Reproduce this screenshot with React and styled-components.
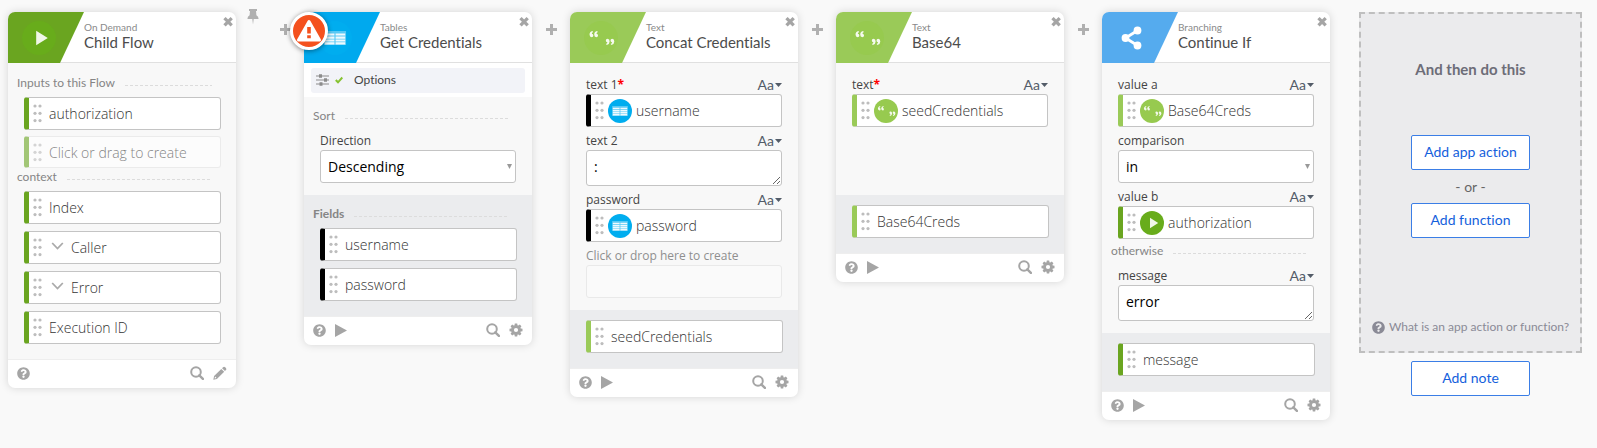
import React, { useId } from "react";
import styled, { createGlobalStyle, css } from "styled-components";
import { FaQuestionCircle } from "react-icons/fa";

const brand = 'Lato, "Open Sans", sans-serif';
const body = '"Open Sans", "Noto Sans", sans-serif';
const GREEN = "#6aa520";
const LIME = "#9aca58";

const GlobalStyle = createGlobalStyle`
  *, *::before, *::after { box-sizing: border-box; }
  body { margin: 0; background: #f9f9f9; font-family: ${body}; font-variant-ligatures: none; color: #555; }
  button { font: inherit; font-variant-ligatures: none; color: inherit; background: none; border: 0; padding: 0; cursor: pointer; }
  svg { display: block; flex: none; }
  h2, p, ul { margin: 0; padding: 0; }
`;

const Canvas = styled.main`
  display: flex;
  align-items: flex-start;
  min-height: 100vh;
  padding: 12px 15px 28px 8px;
  overflow-x: auto;
`;

const Card = styled.article`
  position: relative;
  flex: 228 1 0;
  min-width: 210px;
  border-radius: 7px;
  background: #fff;
  box-shadow: 0 0 8px rgba(0, 0, 0, 0.15);
`;

const CardHeader = styled.header`
  display: flex;
  height: 51px;
  border-bottom: 1px solid #e0e0e0;
`;

const Flag = styled.div`
  flex: none;
  display: flex;
  align-items: center;
  width: 76px;
  height: 51px;
  padding-left: 14px;
  border-top-left-radius: 7px;
  background: ${(p) => p.$color};
  clip-path: polygon(0 0, 100% 0, 52px 100%, 0 100%);
`;

const Heading = styled.div`
  flex: 1;
  min-width: 0;
  padding-top: 10px;
  font-family: ${brand};
  white-space: nowrap;
`;

const Kicker = styled.p`
  font-size: 10px;
  line-height: 11px;
  color: #8a8a8a;
`;

const Title = styled.h2`
  font-size: 15px;
  font-weight: 400;
  line-height: 18px;
  color: #4c4c4c;
`;

const CloseButton = styled.button`
  align-self: flex-start;
  margin: 5px 2px 0 0;
  color: #a5a5a5;
`;

const Inputs = styled.section`
  padding: ${(p) => p.$pad || "8px 0 12px"};
  min-height: ${(p) => p.$min || 0}px;
  background: #f8f8f8;
`;

const Outputs = styled.section`
  padding: 10px 0 15px;
  background: #ebecee;
`;

const CardFooter = styled.footer`
  display: flex;
  align-items: center;
  gap: 9px;
  height: 29px;
  padding: 0 9px 2px;
  border-top: 1px solid #eee;
  color: #a5a5a5;
`;

const Spacer = styled.span`
  flex: 1;
`;

const GroupTitle = styled.div`
  display: flex;
  align-items: center;
  gap: 10px;
  height: 23px;
  padding: ${(p) => (p.$form ? "6px" : "0")} 24px 0 9px;
  font-family: ${brand};
  font-size: 12px;
  line-height: 16px;
  color: #858585;

  span {
    padding-bottom: 5px;
    font-weight: ${(p) => (p.$strong ? 700 : 400)};
  }

  &::after {
    content: "";
    flex: 1;
    height: 1px;
    background: repeating-linear-gradient(90deg, #dcdcdc 0 3px, transparent 3px 5px);
  }
`;

const TileList = styled.ul`
  display: flex;
  flex-direction: column;
  gap: 7px;
  padding: 0 15px 0 16px;
  list-style: none;
`;

const box = css`
  height: 33px;
  border: 1px solid #c4c4c4;
  border-radius: 3px;
  background: #fff;
`;

const ghost = css`
  height: 32px;
  margin-top: -1px;
  border-color: #e4e4e4;
  opacity: 0.6;
`;

const Tile = styled.li`
  ${box}
  ${(p) => p.$ghost && ghost}
  display: flex;
  align-items: center;
  gap: 7px;
  padding-left: 4px;
  border-left: 5px solid ${(p) => p.$color};
  font-size: 14px;
  font-weight: 300;
  color: #333;
`;

const Chevron = styled.button`
  padding: 0 0 3px 2px;
  color: #aaa;
`;

const Field = styled.div`
  padding: 0 16px;
`;

const LabelRow = styled.div`
  display: flex;
  align-items: center;
  justify-content: space-between;
  height: 23px;
  padding-top: 5px;
  font-size: 12px;
  line-height: 16px;
  color: #444;
`;

const Faded = styled.span`
  color: #8f8f8f;
`;

const Required = styled.b`
  color: #f00;
`;

const CaseButton = styled.button`
  display: flex;
  align-items: center;
  gap: 1px;
  padding-bottom: 1px;
  font-family: ${brand};
  font-size: 14px;
  line-height: 16px;
  color: #535c68;
`;

const TokenBox = styled.div`
  ${box}
  display: flex;
  align-items: center;
  gap: 4px;
  padding-left: 4px;
  border-left: 5px solid ${(p) => p.$color};
  font-size: 14px;
  font-weight: 300;
  color: #333;
`;

const Disc = styled.span`
  flex: none;
  display: block;
  border-radius: 50%;
  background: ${(p) => p.$color};
`;

const TextBox = styled.textarea`
  ${box}
  display: block;
  width: 100%;
  height: 36px;
  padding: 6px 7px;
  font: 14px/20px ${body};
  color: #000;
  resize: vertical;
`;

const EmptyBox = styled.input`
  ${box}
  display: block;
  width: 100%;
  border-color: #e9e9e9;
  background: #fafafa;
`;

const SelectWrap = styled.div`
  display: grid;
  align-items: center;
  color: #999;

  > * { grid-area: 1 / 1; }
  > svg { justify-self: end; margin-right: 4px; pointer-events: none; }
`;

const Select = styled.select`
  ${box}
  appearance: none;
  width: 100%;
  padding: 0 7px;
  font: 14px/20px ${body};
  color: #000;
`;

const OptionsStrip = styled.div`
  padding: 5px 7px 4px;
`;

const OptionsButton = styled.button`
  display: flex;
  align-items: center;
  width: 100%;
  height: 25px;
  padding: 0 0 2px 5px;
  border-radius: 3px;
  background: #f2f3f8;
  font-family: ${brand};
  font-size: 12px;
  color: #444;

  svg + svg { margin: 0 11px 0 6px; }
`;

const Link = styled.div`
  flex: none;
  display: flex;
  justify-content: center;
  width: 38px;
  padding-top: 12px;
  color: #b0b0b0;
`;

const PinSlot = styled.div`
  flex: none;
  display: flex;
  justify-content: center;
  width: 30px;
  margin-top: -3px;
  padding-left: 4px;
  color: #b0b0b0;
`;

const AlertBadge = styled.div`
  position: absolute;
  top: 0;
  left: -14px;
  display: flex;
  align-items: center;
  justify-content: center;
  width: 38px;
  height: 38px;
  border: 3px solid #fff;
  border-radius: 50%;
  background: #f4511e;
  box-shadow: 0 1px 5px rgba(0, 0, 0, 0.45);
`;

const NextColumn = styled.aside`
  flex: 223 1 0;
  min-width: 210px;
  display: flex;
  flex-direction: column;
  align-items: center;
  gap: 8px;
  margin-left: 29px;
  font-family: ${brand};
`;

const NextPanel = styled.div`
  display: flex;
  flex-direction: column;
  align-items: center;
  width: 100%;
  border: 2px dashed #bfbfbf;
  background: #ebebed;
  padding: 45px 0 14px;
`;

const NextTitle = styled.h2`
  margin-bottom: 56px;
  font-size: 15px;
  line-height: 20px;
  font-weight: 700;
  color: #6d6d78;
`;

const Or = styled.p`
  font-size: 14px;
  line-height: 33px;
  color: #666;
`;

const ActionButton = styled.button`
  width: 119px;
  height: 35px;
  padding-bottom: 3px;
  border: 1px solid #3b7ee6;
  border-radius: 2px;
  background: #fff;
  font-size: 14px;
  color: #1460dc;
`;

const HelpLink = styled.a`
  display: flex;
  align-items: center;
  gap: 4px;
  margin-top: 79px;
  font-size: 12px;
  line-height: 20px;
  color: #8a8a96;
  text-decoration: none;
  white-space: nowrap;
`;

const Close = () => (
  <svg width="12" height="10" viewBox="0 0 12 10">
    <path d="M2.500 1.200l7.200 7.200M9.700 1.200l-7.200 7.200" stroke="currentColor" strokeWidth="3.300" />
  </svg>
);

const Grip = () => (
  <svg width="9" height="19" viewBox="0 0 9 19" fill="#bdbdbd">
    {[2, 9.3, 16.6].map((y) => [2, 7].map((x) => <circle key={`${x}${y}`} cx={x} cy={y} r="1.6" />))}
  </svg>
);

const Caret = ({ w = 7, h = 4 }) => (
  <svg width={w} height={h} viewBox="0 0 7 4" preserveAspectRatio="none" fill="currentColor">
    <path d="M0 0h7L3.5 4z" />
  </svg>
);

const Plus = () => (
  <svg width="11" height="11" viewBox="0 0 11 11">
    <path d="M5.5 0v11M0 5.5h11" stroke="currentColor" strokeWidth="3" />
  </svg>
);

const Pin = () => (
  <svg width="12" height="16" viewBox="0 0 12 16" fill="currentColor">
    <path d="M2 0h8v2H9l.4 4.3Q11.6 7.600 11.600 10H.4Q.4 7.600 2.600 6.300L3 2H2z" />
    <path d="M5.300 10h1.400L6 15.500z" />
  </svg>
);

const Search = () => (
  <svg width="14" height="14" viewBox="0 0 14 14" fill="none" stroke="currentColor">
    <circle cx="6" cy="6" r="4.800" strokeWidth="2" />
    <path d="M9.300 9.300l3.600 3.600" strokeWidth="2.400" strokeLinecap="round" />
  </svg>
);

const Gear = () => (
  <svg width="14" height="14" viewBox="0 0 14 14">
    <g fill="currentColor">
      {[0, 45, 90, 135].map((a) => (
        <path key={a} d="M5.800 .5h2.400l.5 3v7l-.5 3H5.800l-.5-3v-7z" transform={`rotate(${a} 7 7)`} />
      ))}
      <circle cx="7" cy="7" r="4.800" />
    </g>
    <circle cx="7" cy="7" r="2.100" fill="#fff" />
  </svg>
);

const Pencil = () => (
  <svg width="14" height="14" viewBox="0 0 13 13" fill="currentColor">
    <path fillRule="evenodd" d="M9.300 1.200Q10.200.1 11.300 1.100l.7.7q1 1.100 0 2l-.9.9-2.700-2.700zM7.700 2.700l2.700 2.700-6.800 6.700-3.300.6.700-3.300zM1.900 9.700l-.4 1.800 1.800-.4z" />
  </svg>
);

const Play = () => (
  <svg width="12" height="13" viewBox="0 0 12 13" fill="currentColor">
    <path d="M0 0l12 6.500L0 13z" />
  </svg>
);

const Glyphs = {
  play: <path d="M10 6.800v10.400L18.200 12z" />,
  quote: (
    <>
      {[4.500, 7.800].map((x) => (
        <path key={x} d={`M${x + 2} 7.800q-1 .3-1 1.200 1.100.1 1.100 1.200 0 1.200-1.200 1.200-1.500 0-1.500-1.800 0-1.900 2-2.500z`} />
      ))}
      {[15.200, 18.500].map((x) => (
        <path key={x} d={`M${x + 0.300} 16.200q1-.3 1-1.200-1.100-.1-1.100-1.200 0-1.200 1.200-1.200 1.500 0 1.500 1.800 0 1.900-2 2.500z`} />
      ))}
    </>
  ),
  table: (
    <>
      <path d="M4.200 7h15.600v10H4.200z" fillOpacity="0.350" />
      {[8.800, 11, 13, 15].map((y) => (
        <path key={y} d={`M4.800 ${y}h6.800v1.500H4.800zM12.400 ${y}h6.800v1.500h-6.800z`} />
      ))}
    </>
  ),
};

const discColor = { play: "#68ac1b", quote: "#97ca4f", table: "#00adef" };

const AppIcon = ({ kind, size = 24 }) => (
  <Disc $color={discColor[kind]}>
    <svg width={size} height={size} viewBox="0 0 24 24" fill="#fff" fillOpacity="0.9">{Glyphs[kind]}</svg>
  </Disc>
);

const BranchIcon = () => (
  <svg width="32" height="24" viewBox="0 0 32 24" fill="#fff">
    <path d="M21.500 4.500L9.500 12l12 7.500" fill="none" stroke="#fff" strokeWidth="2.800" />
    <circle cx="9.500" cy="12" r="3.900" />
    <circle cx="21.500" cy="4.500" r="3.900" />
    <circle cx="21.500" cy="19.500" r="3.900" />
  </svg>
);

const Warning = () => (
  <svg width="26" height="24" viewBox="0 0 26 24">
    <path d="M13 2.500L23.500 21h-21z" fill="#fff" stroke="#fff" strokeWidth="3" strokeLinejoin="round" />
    <path d="M11.200 8h3.600v6.500h-3.600zM11.200 16.200h3.600v3h-3.600z" fill="#f4511e" />
  </svg>
);

const Sliders = () => (
  <svg width="13" height="12" viewBox="0 0 13 12" fill="#8c8c8c">
    <path d="M0 1.500h13v1H0zM0 5.500h13v1H0zM0 9.500h13v1H0z" />
    <path d="M3 .3h3v3.400H3zM8 4.300h3v3.400H8zM3.500 8.300h3v3.400h-3z" />
  </svg>
);

const Check = () => (
  <svg width="8" height="8" viewBox="0 0 8 8">
    <path d="M.8 4l2.200 2.300L7.300 1.500" fill="none" stroke="#86c232" strokeWidth="2" />
  </svg>
);

function Header({ color, icon, kicker, title }) {
  return (
    <CardHeader>
      <Flag $color={color}>{icon}</Flag>
      <Heading>
        <Kicker>{kicker}</Kicker>
        <Title>{title}</Title>
      </Heading>
      <CloseButton aria-label="Close"><Close /></CloseButton>
    </CardHeader>
  );
}

function Footer({ editable }) {
  return (
    <CardFooter>
      <button aria-label="Help"><FaQuestionCircle size={13} /></button>
      {!editable && <button aria-label="Run"><Play /></button>}
      <Spacer />
      <button aria-label="Search"><Search /></button>
      {editable
        ? <button aria-label="Edit"><Pencil /></button>
        : <button aria-label="Settings"><Gear /></button>}
    </CardFooter>
  );
}

const Group = ({ children, ...rest }) => <GroupTitle {...rest}><span>{children}</span></GroupTitle>;

const Output = ({ color, children, expandable, ghost: faint }) => (
  <Tile $color={color} $ghost={faint}>
    <Grip />
    {expandable && (
      <Chevron aria-label={`Expand ${children}`}>
        <svg width="13" height="8" viewBox="0 0 12 8"><path d="M.7 1l5.300 5.500L11.300 1" fill="none" stroke="currentColor" strokeWidth="1.800" /></svg>
      </Chevron>
    )}
    {children}
  </Tile>
);

const CasePicker = ({ label }) => (
  <CaseButton aria-label={`Type of ${label}`}>Aa<Caret w={7} h={4} /></CaseButton>
);

function TokenField({ label, required, kind, color, children }) {
  const id = useId();
  return (
    <Field>
      <LabelRow>
        <span id={id}>{label}{required && <Required>*</Required>}</span>
        <CasePicker label={label} />
      </LabelRow>
      <TokenBox role="group" aria-labelledby={id} $color={color}>
        <Grip />
        <AppIcon kind={kind} />
        {children}
      </TokenBox>
    </Field>
  );
}

function TextField({ label, value }) {
  const id = useId();
  return (
    <Field>
      <LabelRow><label htmlFor={id}>{label}</label><CasePicker label={label} /></LabelRow>
      <TextBox id={id} defaultValue={value} rows={1} />
    </Field>
  );
}

function SelectField({ label, options }) {
  const id = useId();
  return (
    <Field>
      <LabelRow><label htmlFor={id}>{label}</label></LabelRow>
      <SelectWrap>
        <Select id={id}>{options.map((o) => <option key={o}>{o}</option>)}</Select>
        <Caret w={5} h={5} />
      </SelectWrap>
    </Field>
  );
}

export default function App() {
  return (
    <>
      <GlobalStyle />
      <Canvas>
        <Card>
          <Header color={GREEN} icon={<AppIcon kind="play" size={34} />} kicker="On Demand" title="Child Flow" />
          <Inputs $pad="11px 0 15px">
            <Group>Inputs to this Flow</Group>
            <TileList>
              <Output color={GREEN}>authorization</Output>
              <Output color={GREEN} ghost>Click or drag to create</Output>
            </TileList>
            <Group>context</Group>
            <TileList>
              <Output color={GREEN}>Index</Output>
              <Output color={GREEN} expandable>Caller</Output>
              <Output color={GREEN} expandable>Error</Output>
              <Output color={GREEN}>Execution ID</Output>
            </TileList>
          </Inputs>
          <Footer editable />
        </Card>
        <PinSlot><Pin /></PinSlot>
        <Link><Plus /></Link>

        <Card>
          <Header color="#00a9ee" icon={<AppIcon kind="table" size={34} />} kicker="Tables" title="Get Credentials" />
          <AlertBadge role="img" aria-label="Warning"><Warning /></AlertBadge>
          <OptionsStrip>
            <OptionsButton><Sliders /><Check />Options</OptionsButton>
          </OptionsStrip>
          <Inputs $pad="7px 0 12px">
            <Group $form>Sort</Group>
            <SelectField label="Direction" options={["Descending", "Ascending"]} />
          </Inputs>
          <Outputs>
            <Group $strong>Fields</Group>
            <TileList>
              <Output color="#000">username</Output>
              <Output color="#000">password</Output>
            </TileList>
          </Outputs>
          <Footer />
        </Card>
        <Link><Plus /></Link>

        <Card>
          <Header color={LIME} icon={<AppIcon kind="quote" size={34} />} kicker="Text" title="Concat Credentials" />
          <Inputs>
            <TokenField label="text 1" required kind="table" color="#000">username</TokenField>
            <TextField label="text 2" value=":" />
            <TokenField label="password" kind="table" color="#000">password</TokenField>
            <Field>
              <LabelRow as="label" htmlFor="new-text"><Faded>Click or drop here to create</Faded></LabelRow>
              <EmptyBox id="new-text" />
            </Field>
          </Inputs>
          <Outputs>
            <TileList><Output color={LIME}>seedCredentials</Output></TileList>
          </Outputs>
          <Footer />
        </Card>
        <Link><Plus /></Link>

        <Card>
          <Header color={LIME} icon={<AppIcon kind="quote" size={34} />} kicker="Text" title="Base64" />
          <Inputs $min={132}>
            <TokenField label="text" required kind="quote" color={LIME}>seedCredentials</TokenField>
          </Inputs>
          <Outputs>
            <TileList><Output color={LIME}>Base64Creds</Output></TileList>
          </Outputs>
          <Footer />
        </Card>
        <Link><Plus /></Link>

        <Card>
          <Header color="#55abee" icon={<BranchIcon />} kicker="Branching" title="Continue If" />
          <Inputs>
            <TokenField label="value a" kind="quote" color={LIME}>Base64Creds</TokenField>
            <SelectField label="comparison" options={["in", "not in"]} />
            <TokenField label="value b" kind="play" color={GREEN}>authorization</TokenField>
            <Group $form>otherwise</Group>
            <TextField label="message" value="error" />
          </Inputs>
          <Outputs>
            <TileList><Output color={GREEN}>message</Output></TileList>
          </Outputs>
          <Footer />
        </Card>

        <NextColumn>
          <NextPanel>
            <NextTitle>And then do this</NextTitle>
            <ActionButton>Add app action</ActionButton>
            <Or>- or -</Or>
            <ActionButton>Add function</ActionButton>
            <HelpLink href="#help"><FaQuestionCircle size={13} />What is an app action or function?</HelpLink>
          </NextPanel>
          <ActionButton>Add note</ActionButton>
        </NextColumn>
      </Canvas>
    </>
  );
}
